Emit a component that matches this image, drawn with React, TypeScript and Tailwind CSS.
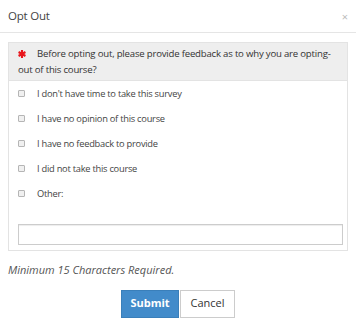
import React from 'react';

const options = [
  "I don't have time to take this survey",
  'I have no opinion of this course',
  'I have no feedback to provide',
  'I did not take this course',
  'Other:',
];

const Asterisk = () => (
  <svg viewBox="0 0 10 10" className="inline-block w-[8px] h-[8px] mr-[11px]">
    <g stroke="#e8161c" strokeWidth="2.6">
      <line x1="5" y1="0" x2="5" y2="10" />
      <line x1="0.7" y1="2.5" x2="9.3" y2="7.5" />
      <line x1="0.7" y1="7.5" x2="9.3" y2="2.5" />
    </g>
  </svg>
);

const App = () => {
  return (
    <div className="w-[356px] h-[326px] bg-white text-[#333] font-['Open_Sans',sans-serif] overflow-hidden">
      <div className="h-[33px] border-b border-[#e5e5e5] pl-2 pr-[8px] flex items-center justify-between">
        <span className="text-[11.5px] tracking-[-0.2px] text-[#444]">Opt Out</span>
        <span className="text-[11px] text-[#bbb] leading-none">×</span>
      </div>
      <div className="px-2 pt-[9px]">
        <div className="border border-[#e3e3e3]">
          <div className="bg-[#eee] border-b border-[#e3e3e3] pl-[9px] pr-2 pt-[3px] pb-[2px] text-[9.6px] tracking-[-0.2px] leading-[16px]">
            <Asterisk />
            Before opting out, please provide feedback as to why you are opting-out of this course?
          </div>
          <ul>
            {options.map((o) => (
              <li key={o} className="h-[25px] flex items-center pl-[9px] text-[9.3px] tracking-[-0.25px] text-[#444]">
                <span className="w-[7px] h-[7px] border border-[#b5b5b5] bg-[#f0f0f0] rounded-[1px] mr-[12px]" />
                {o}
              </li>
            ))}
          </ul>
          <div className="pt-[18px] pb-[5px] pl-[9px] pr-[4px]">
            <input
              type="text"
              className="block w-full h-[21px] border border-[#ccc] shadow-[inset_0_1px_1px_rgba(0,0,0,0.075)] outline-none"
            />
          </div>
        </div>
        <p className="mt-[11px] text-[11px] italic text-[#555]">Minimum 15 Characters Required.</p>
        <div className="flex justify-center gap-[1px] mt-[11px]">
          <button className="w-[58px] h-[28px] bg-[#428bca] border border-[#3a7fba] text-white font-bold text-[11px]">
            Submit
          </button>
          <button className="w-[55px] h-[28px] bg-white border border-[#ccc] text-[#333] text-[11px]">
            Cancel
          </button>
        </div>
      </div>
    </div>
  );
};

export default App;
